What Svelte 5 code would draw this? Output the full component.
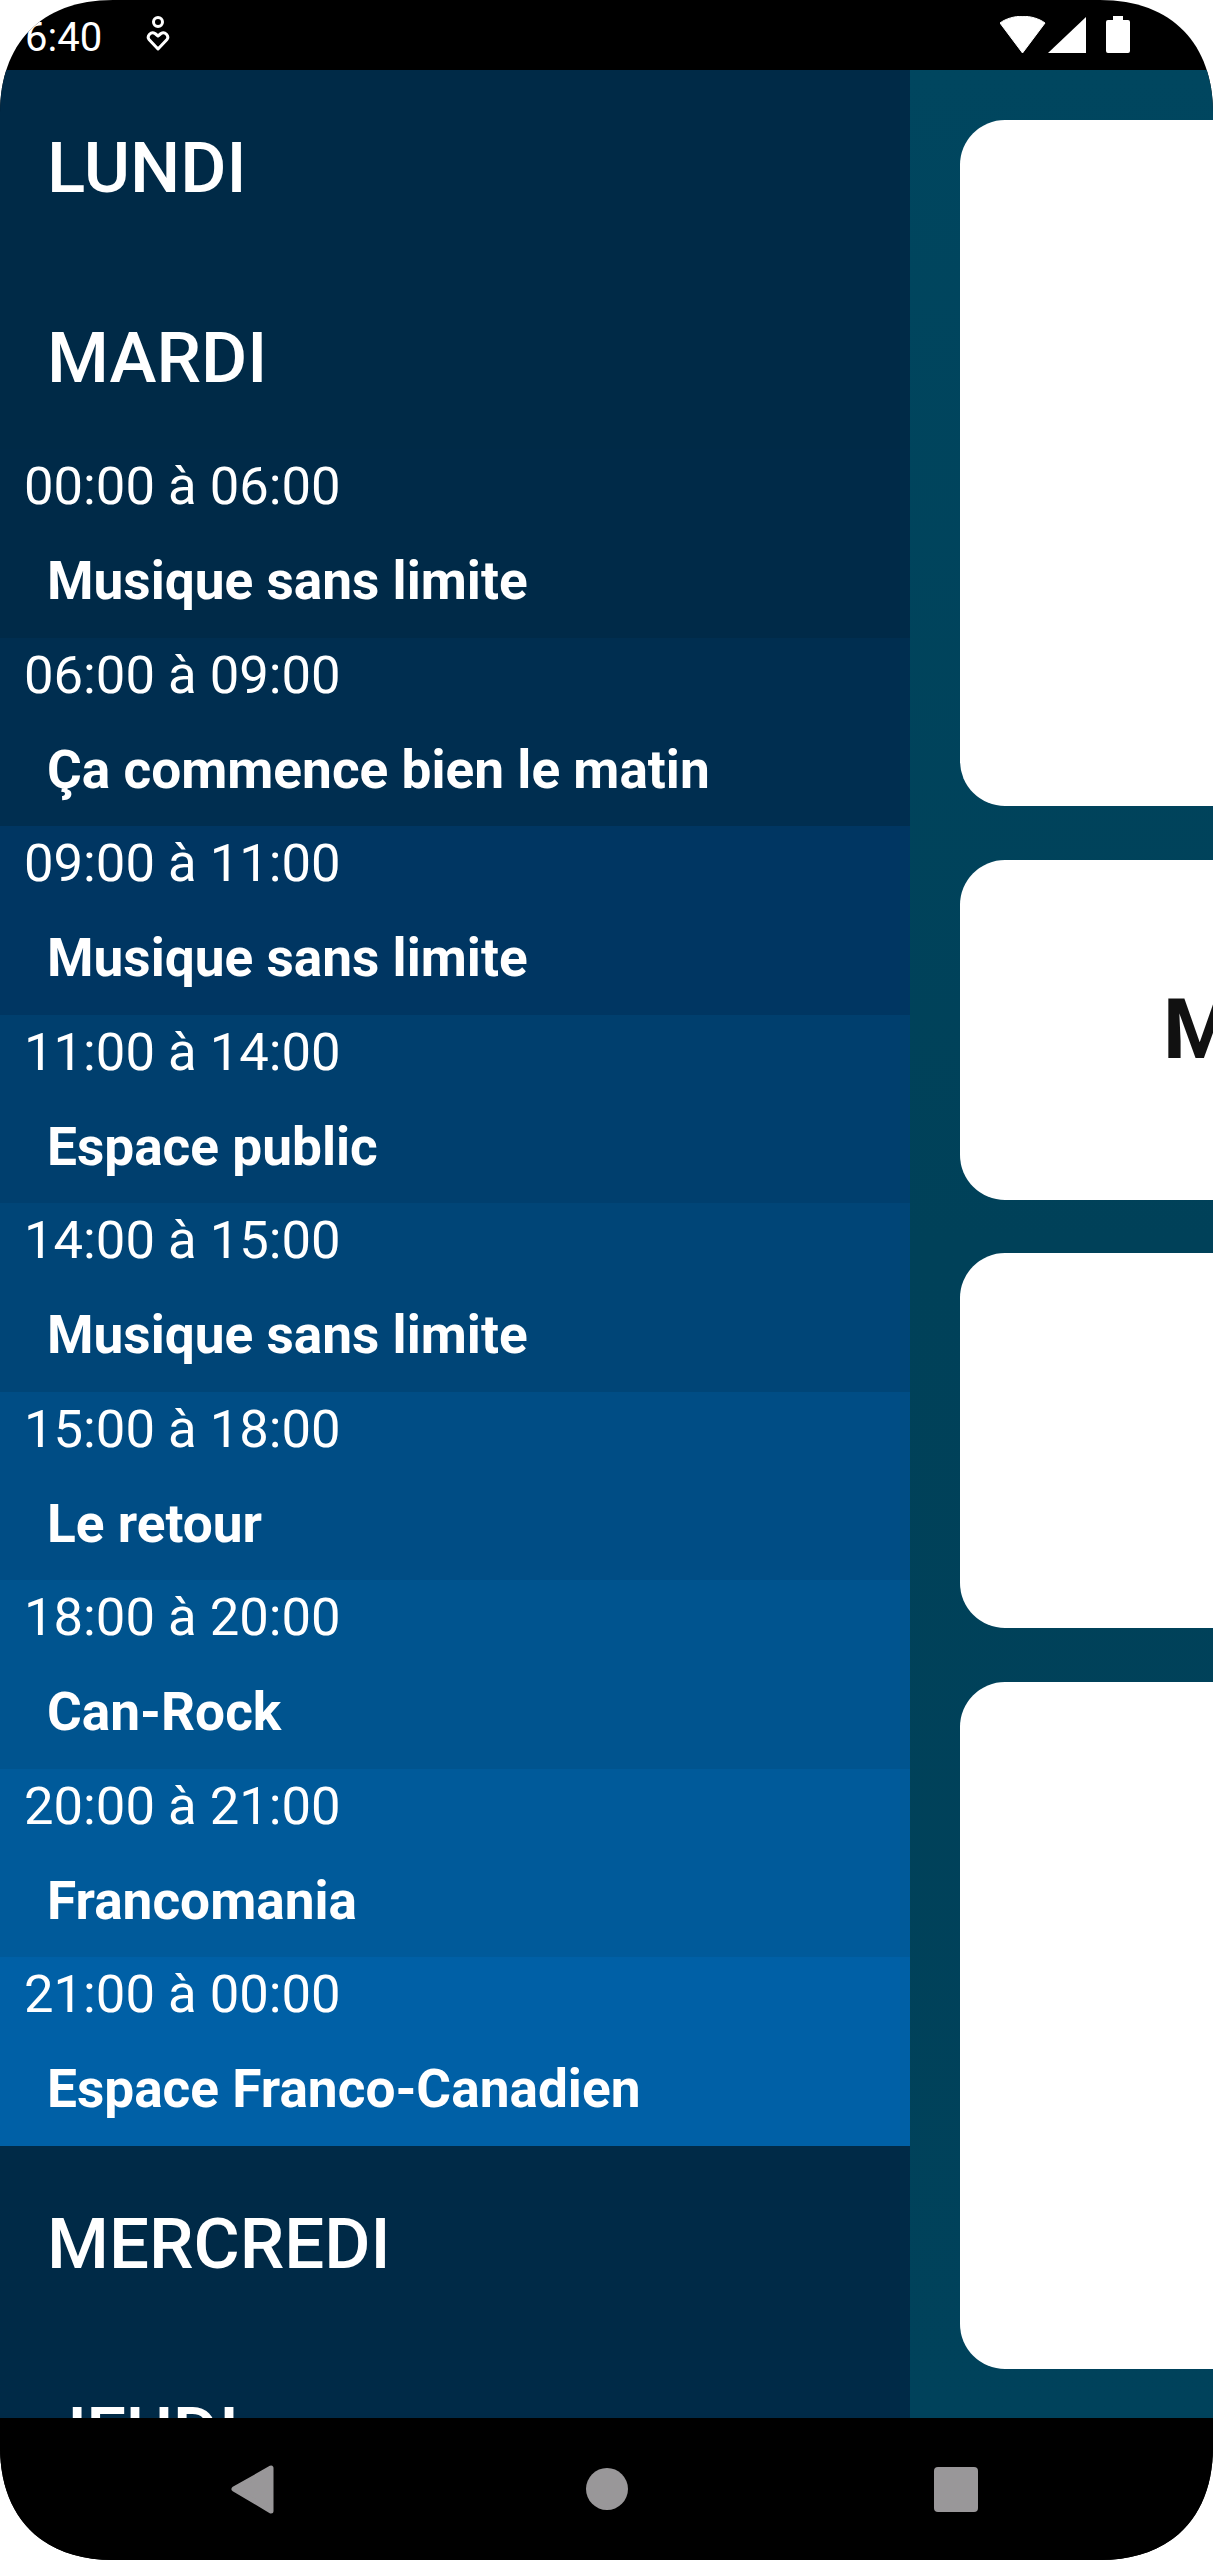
<script>
  const days = ['LUNDI', 'MARDI'];
  const shows = [
    ['00:00 à 06:00', 'Musique sans limite', '#002a48'],
    ['06:00 à 09:00', 'Ça commence bien le matin', '#002e50'],
    ['09:00 à 11:00', 'Musique sans limite', '#003662'],
    ['11:00 à 14:00', 'Espace public', '#003f6e'],
    ['14:00 à 15:00', 'Musique sans limite', '#004577'],
    ['15:00 à 18:00', 'Le retour', '#004d85'],
    ['18:00 à 20:00', 'Can-Rock', '#00548f'],
    ['20:00 à 21:00', 'Francomania', '#005a9a'],
    ['21:00 à 00:00', 'Espace Franco-Canadien', '#0060a6']
  ];
</script>

<div class="frame">
  <header class="status">
    <span class="time">6:40</span>
    <svg class="key" viewBox="0 0 24 38" width="24" height="38" aria-hidden="true">
      <circle cx="12" cy="7" r="4.5" fill="none" stroke="#fff" stroke-width="3" />
      <path d="M12 34 L3 24.5 C0.5 21 5 16 9 18.5 L12 21 L15 18.5 C19 16 23.5 21 21 24.5 Z" fill="none" stroke="#fff" stroke-width="3" stroke-linejoin="round" />
    </svg>
    <svg class="sys" viewBox="0 0 132 40" width="132" height="40" aria-hidden="true">
      <path d="M0 7 C12 -2 33 -2 45 7 L22.5 37 Z" fill="#fff" stroke="#fff" stroke-width="1" stroke-linejoin="round" />
      <path d="M48 37 L86 1 V37 Z" fill="#fff" />
      <path d="M108 4 H113 V0 H123 V4 H128 Q130 4 130 6 V35 Q130 37 128 37 H108 Q106 37 106 35 V6 Q106 4 108 4 Z" fill="#fff" />
    </svg>
  </header>

  <main class="main">
    <section class="schedule">
      {#each days as d}
        <div class="day">{d}</div>
      {/each}
      {#each shows as s}
        <div class="show" style="background:{s[2]}">
          <div class="hours">{s[0]}</div>
          <div class="title">{s[1]}</div>
        </div>
      {/each}
      <div class="day">MERCREDI</div>
      <div class="day">JEUDI</div>
    </section>
    <section class="cards">
      <div class="card c1"></div>
      <div class="card c2"><span class="big">M</span></div>
      <div class="card c3"></div>
      <div class="card c4"></div>
    </section>
  </main>

  <footer class="nav">
    <svg viewBox="0 0 1213 142" width="1213" height="142" aria-hidden="true">
      <path d="M234 71 L271 50 V93 Z" fill="#999799" stroke="#999799" stroke-width="5" stroke-linejoin="round" />
      <circle cx="607" cy="71" r="21" fill="#999799" />
      <rect x="934" y="49" width="44" height="45" rx="4" fill="#999799" />
    </svg>
  </footer>
</div>

<style>
  :global(body) {
    margin: 0;
    background: #fff;
  }
  .frame {
    width: 1213px;
    height: 2560px;
    display: flex;
    flex-direction: column;
    overflow: hidden;
    font-family: Roboto, "Liberation Sans", sans-serif;
    color: #fff;
    background: #000;
    clip-path: path('M113 0 H1100 C1173 0 1213 45 1213 113 V2447 C1213 2515 1173 2560 1100 2560 H113 C40 2560 0 2515 0 2447 V113 C0 45 40 0 113 0 Z');
  }
  .status {
    height: 70px;
    flex: none;
    display: flex;
    align-items: flex-start;
  }
  .time {
    font-size: 40px;
    line-height: 47px;
    margin: 14px 0 0 25px;
  }
  .key {
    margin: 15px 0 0 44px;
  }
  .sys {
    margin: 16px 81px 0 auto;
  }
  .main {
    flex: none;
    height: 2348px;
    display: flex;
    overflow: hidden;
  }
  .schedule {
    width: 910px;
    flex: none;
    background: #002a47;
  }
  .day {
    height: 189.5px;
    box-sizing: border-box;
    padding: 57px 0 0 47px;
    font-size: 70.8px;
    line-height: 82px;
    font-weight: 500;
  }
  .show {
    height: 188.5px;
    box-sizing: border-box;
    padding-top: 6px;
  }
  .hours {
    font-size: 52.6px;
    line-height: 62px;
    padding-left: 24px;
  }
  .title {
    font-size: 53.2px;
    line-height: 62px;
    font-weight: 700;
    padding: 33px 0 0 47px;
  }
  .cards {
    flex: 1;
    min-width: 0;
    padding: 50px 0 0 50px;
    display: flex;
    flex-direction: column;
    gap: 53.5px;
    background: linear-gradient(180deg, #00465f 0%, #004159 50%, #00425b 100%);
    overflow: hidden;
  }
  .card {
    width: 400px;
    flex: none;
    background: #fff;
    border-radius: 45px;
    display: flex;
    align-items: center;
  }
  .c1 { height: 686px; }
  .c2 { height: 340px; }
  .c3 { height: 375px; }
  .c4 { height: 687px; }
  .big {
    margin-left: 203px;
    font-size: 84px;
    font-weight: 700;
    color: #111;
    line-height: 98px;
  }
  .nav {
    height: 142px;
    flex: none;
    background: #000;
  }
  .nav svg {
    display: block;
  }
</style>
